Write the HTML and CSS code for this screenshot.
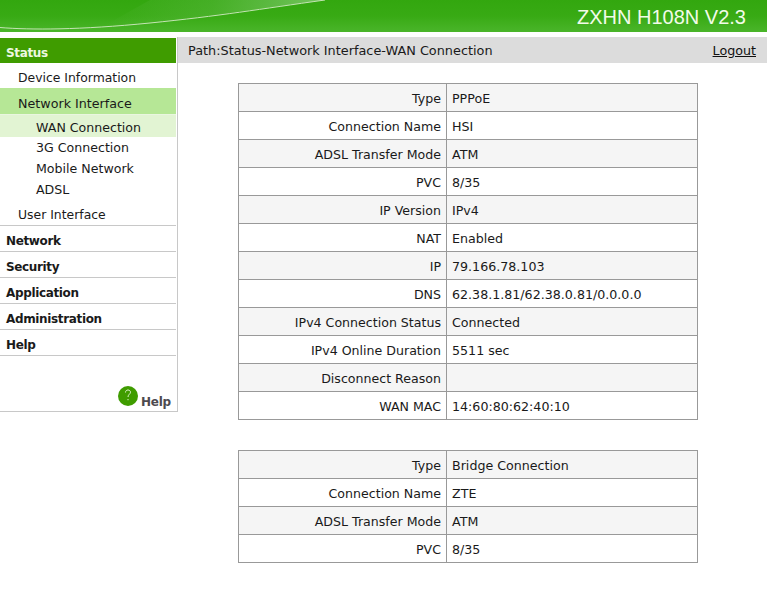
FILE: index.html
```html
<!DOCTYPE html>
<html>
<head>
<meta charset="utf-8">
<title>ZXHN H108N V2.3</title>
<link rel="stylesheet" href="styles.css">
</head>
<body>
<header class="top">
  <svg class="swoosh" viewBox="0 0 767 32" aria-hidden="true">
    <defs>
      <linearGradient id="sw" x1="0" y1="0" x2="1" y2="0">
        <stop offset="0" stop-color="#6fc15a" stop-opacity="0"/>
        <stop offset="0.5" stop-color="#6fc15a" stop-opacity="0.3"/>
        <stop offset="1" stop-color="#7cc868" stop-opacity="0.9"/>
      </linearGradient>
    </defs>
    <path d="M100 28 C 115 27 130 25 150 23 S 260 9 325 0 L 150 0 Z" fill="url(#sw)"/>
    <path d="M0 27.500 C 30 30 80 30 150 23 S 260 9 325 0" fill="none" stroke="#c4e4b4" stroke-width="1"/>
  </svg>
  <span class="model">ZXHN H108N V2.3</span>
</header>
<div class="main">
  <nav class="side">
    <div class="m1 on">Status</div>
    <div class="m2 dev">Device Information</div>
    <div class="m2 sel">Network Interface</div>
    <div class="m3 sel3">WAN Connection</div>
    <div class="m3">3G Connection</div>
    <div class="m3">Mobile Network</div>
    <div class="m3">ADSL</div>
    <div class="m2 last">User Interface</div>
    <div class="m1">Network</div>
    <div class="m1">Security</div>
    <div class="m1">Application</div>
    <div class="m1">Administration</div>
    <div class="m1">Help</div>
    <div class="helpbox">
      <svg class="helpicon" width="20" height="20" viewBox="0 0 20 20" aria-hidden="true">
        <circle cx="10" cy="10" r="10" fill="#3f9c00"/>
        <path d="M7.500 6.500 C7.500 4.800 8.700 4 10 4 C11.400 4 12.500 4.900 12.500 6.200 C12.500 8 10 8.500 10 11" fill="none" stroke="#dff3cf" stroke-width="1"/>
        <rect x="9.500" y="13" width="1" height="1.200" fill="#dff3cf"/>
      </svg>
      <span class="helptext">Help</span>
    </div>
  </nav>
  <main class="content">
    <div class="path">
      <span>Path:Status-Network Interface-WAN Connection</span>
      <a class="logout" href="#">Logout</a>
    </div>
    <table class="info first">
      <tr class="odd"><th>Type</th><td>PPPoE</td></tr>
      <tr><th>Connection Name</th><td>HSI</td></tr>
      <tr class="odd"><th>ADSL Transfer Mode</th><td>ATM</td></tr>
      <tr><th>PVC</th><td>8/35</td></tr>
      <tr class="odd"><th>IP Version</th><td>IPv4</td></tr>
      <tr><th>NAT</th><td>Enabled</td></tr>
      <tr class="odd"><th>IP</th><td>79.166.78.103</td></tr>
      <tr><th>DNS</th><td>62.38.1.81/62.38.0.81/0.0.0.0</td></tr>
      <tr class="odd"><th>IPv4 Connection Status</th><td>Connected</td></tr>
      <tr><th>IPv4 Online Duration</th><td>5511 sec</td></tr>
      <tr class="odd"><th>Disconnect Reason</th><td></td></tr>
      <tr><th>WAN MAC</th><td>14:60:80:62:40:10</td></tr>
    </table>
    <table class="info">
      <tr class="odd"><th>Type</th><td>Bridge Connection</td></tr>
      <tr><th>Connection Name</th><td>ZTE</td></tr>
      <tr class="odd"><th>ADSL Transfer Mode</th><td>ATM</td></tr>
      <tr><th>PVC</th><td>8/35</td></tr>
    </table>
  </main>
</div>
</body>
</html>
```

FILE: styles.css
```css
* { box-sizing: border-box; }
html, body { margin: 0; padding: 0; background: #fff; }
body {
  width: 767px;
  height: 602px;
  overflow: hidden;
  font-family: "DejaVu Sans", Verdana, sans-serif;
  font-size: 12.500px;
  color: #1a1a1a;
}
.top {
  position: relative;
  height: 32px;
  background: linear-gradient(to bottom, #33a70f 0%, #38aa14 50%, #4ab52a 100%);
  display: flex;
  justify-content: flex-end;
  align-items: center;
  padding-right: 21px;
  overflow: hidden;
}
.swoosh { position: absolute; left: 0; top: 0; width: 767px; height: 32px; }
.model {
  position: relative;
  font-family: "Liberation Sans", Arial, sans-serif;
  font-size: 20px;
  color: #f2fbe9;
  top: 1px;
}
.main { display: flex; margin-top: 5px; }
.side {
  width: 178px;
  height: 375px;
  padding: 1px 1px 0 0;
  border-right: 1px solid #c8c8c8;
  border-bottom: 1px solid #c8c8c8;
  display: flex;
  flex-direction: column;
}
.m1 {
  height: 26px;
  line-height: 20px;
  padding: 5px 0 0 6px;
  font-weight: bold;
  font-size: 12px;
  letter-spacing: -0.35px;
  border-bottom: 1px solid #c8c8c8;
}
.m1.on { background: #3f9c00; color: #eef8e0; border-bottom: 0; height: 25px; }
.m2 { line-height: 20px; padding-left: 18px; font-size: 12.700px; }
.m2.dev { height: 25px; padding-top: 5px; font-size: 12.400px; }
.m2.sel { background: #b6e796; height: 27px; padding-top: 6px; border-bottom: 1px solid #eaf6e0; }
.m2.last { border-bottom: 1px solid #c8c8c8; height: 26px; padding-top: 5px; font-size: 12.400px; }
.m3 { height: 21px; line-height: 20px; padding: 1px 0 0 36px; font-size: 12.600px; }
.m3.sel3 { background: #e2f4d3; height: 22px; padding-top: 3px; }
.helpbox {
  margin-top: auto;
  padding: 0 5px 0 0;
  display: flex;
  justify-content: flex-end;
  align-items: flex-end;
  height: 26px;
}
.helpicon { margin-bottom: 5px; margin-right: 3px; }
.helptext { font-weight: bold; font-size: 12px; letter-spacing: -0.2px; color: #4d4a4f; line-height: 18px; }
.content { flex: 1; min-width: 0; }
.path {
  height: 26px;
  background: #dcdcdc;
  display: flex;
  justify-content: space-between;
  align-items: center;
  padding: 0 11px 0 10px;
  font-size: 12.850px;
}
.logout { color: #111; text-decoration: underline; font-size: 12.700px; }
.info {
  width: 460px;
  margin-left: 60px;
  border-collapse: collapse;
  table-layout: fixed;
  border: 1px solid #999;
}
.first { margin-top: 20px; margin-bottom: 30px; }
.info tr { height: 28px; }
.info th, .info td { border: 1px solid #999; padding: 2px 5px 0; font-weight: normal; }
.info th { width: 208px; text-align: right; font-size: 12.600px; }
.info td { text-align: left; font-size: 12.650px; }
.odd { background: #f5f5f5; }
```
